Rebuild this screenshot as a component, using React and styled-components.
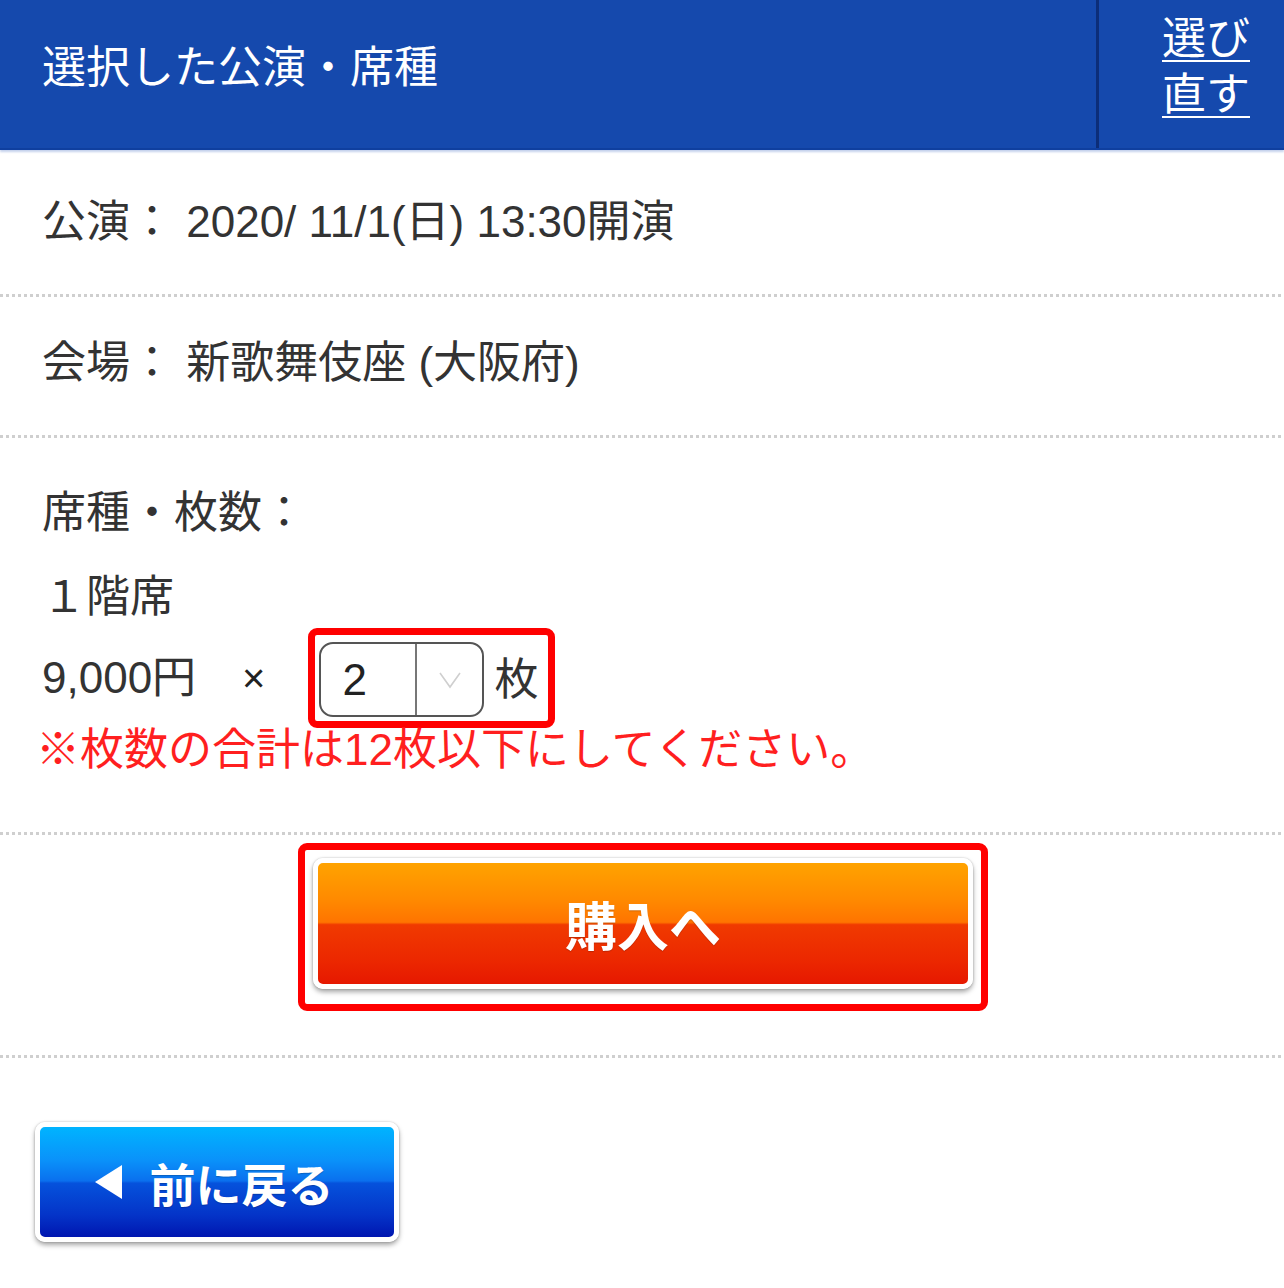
import React from 'react';
import styled, { createGlobalStyle } from 'styled-components';

const GlobalStyle = createGlobalStyle`
    html, body {
        margin: 0;
        padding: 0;
        background: #fff;
    }
    body {
        font-family: "Liberation Sans", "Noto Sans CJK JP", sans-serif;
        color: #333;
    }
`;

const Page = styled.div`
    width: 1284px;
`;

const Header = styled.header`
    display: flex;
    height: 148px;
    background: #1549ad;
    border-bottom: 2px solid #0f3f9f;
    box-shadow: 0 2px 2px rgba(21, 73, 174, 0.25);
`;

const HeaderTitle = styled.h1`
    flex: 1;
    margin: 0;
    padding-left: 42px;
    padding-bottom: 20px;
    display: flex;
    align-items: center;
    font-size: 44px;
    font-weight: 400;
    color: #fff;
`;

const RedoCell = styled.div`
    box-sizing: border-box;
    width: 188px;
    border-left: 3px solid #0c2d78;
    display: flex;
    align-items: center;
    justify-content: flex-end;
    padding-right: 34px;
    padding-bottom: 14px;
`;

const RedoLink = styled.a`
    color: #fff;
    font-size: 44px;
    line-height: 56px;
    text-decoration: underline;
    text-decoration-thickness: 2px;
    text-underline-offset: 6px;
`;

const Row = styled.section`
    padding: ${p => p.$pad};
    font-size: 44px;
    line-height: 44px;
`;

const Divider = styled.div`
    height: 3px;
    background-image: linear-gradient(to right, #cfcfcf 3px, transparent 3px);
    background-size: 6px 3px;
`;

const Label = styled.div`
    line-height: 84px;
`;

const SeatName = styled.div`
    padding-top: 11px;
    line-height: 62px;
`;

const PriceRow = styled.div`
    display: flex;
    align-items: center;
    height: 100px;
`;

const Times = styled.span`
    margin-left: 46px;
    margin-right: 43px;
    font-size: 40px;
    color: #222;
`;

const Highlight = styled.div`
    display: inline-flex;
    align-items: center;
    border: 7px solid #ff0000;
    border-radius: 9px;
    padding: ${p => p.$pad};
`;

const Select = styled.div`
    box-sizing: border-box;
    display: flex;
    width: 165px;
    height: 75px;
    border: 2px solid #555;
    border-radius: 14px;
`;

const SelectValue = styled.div`
    width: 73px;
    padding-left: 21px;
    display: flex;
    align-items: center;
    font-size: 44px;
    color: #222;
`;

const SelectArrow = styled.div`
    flex: 1;
    border-left: 2px solid #777;
    display: flex;
    align-items: center;
    justify-content: center;
`;

const Unit = styled.span`
    margin-left: 10px;
    font-size: 44px;
`;

const Note = styled.p`
    margin: 0 0 0 -6px;
    color: #ff1f1f;
    font-size: 44px;
    line-height: 44px;
`;

const Center = styled.div`
    display: flex;
    justify-content: center;
    padding: 8px 0 44px 2px;
`;

const GlossButton = styled.button`
    box-sizing: border-box;
    display: flex;
    align-items: center;
    justify-content: center;
    gap: ${p => p.$gap || 0}px;
    width: ${p => p.$w}px;
    height: ${p => p.$h}px;
    padding: 0 ${p => p.$pr || 0}px 0 0;
    border: 5px solid #fff;
    border-radius: 10px;
    background: ${p => p.$bg};
    box-shadow: 0 3px 5px rgba(0, 0, 0, 0.35), 0 0 2px rgba(0, 0, 0, 0.25);
    color: #fff;
    font-family: "Noto Sans CJK JP", sans-serif;
    font-size: ${p => p.$fs}px;
    font-weight: 700;
    text-shadow: 0 1px 1px rgba(0, 0, 0, 0.2);
    cursor: pointer;
`;

const BackWrap = styled.div`
    padding: 64px 0 40px 35px;
`;

const ORANGE = 'linear-gradient(to bottom, #ffa300 0%, #ff8a00 30%, #ff7400 49%, #f03a00 51%, #ec2800 80%, #e61800 100%)';
const BLUE = 'linear-gradient(to bottom, #00b4ff 0%, #0a92fa 30%, #0a70ee 49%, #0552dc 51%, #0434c8 80%, #0016b0 100%)';

export default function App() {
    return (
        <Page>
            <GlobalStyle />
            <Header>
                <HeaderTitle>選択した公演・席種</HeaderTitle>
                <RedoCell>
                    <RedoLink href="#">選び<br />直す</RedoLink>
                </RedoCell>
            </Header>

            <Row $pad="50px 42px 50px">公演： 2020/ 11/1(日) 13:30開演</Row>
            <Divider />
            <Row $pad="44px 42px 50px">会場： 新歌舞伎座 (大阪府)</Row>
            <Divider />

            <Row $pad="33px 42px 60px">
                <Label>席種・枚数：</Label>
                <SeatName>１階席</SeatName>
                <PriceRow>
                    <span>9,000円</span>
                    <Times>×</Times>
                    <Highlight $pad="7px 10px 4px 4px">
                        <Select>
                            <SelectValue>2</SelectValue>
                            <SelectArrow>
                                <svg width="24" height="18" viewBox="0 0 24 18">
                                    <polyline points="2,2 12,16 22,2" fill="none" stroke="#cfcfcf" strokeWidth="1.6" />
                                </svg>
                            </SelectArrow>
                        </Select>
                        <Unit>枚</Unit>
                    </Highlight>
                </PriceRow>
                <Note>※枚数の合計は12枚以下にしてください。</Note>
            </Row>
            <Divider />

            <Center>
                <Highlight $pad="8px 8px 15px 8px">
                    <GlossButton $w={660} $h={131} $bg={ORANGE} $fs={52}>購入へ</GlossButton>
                </Highlight>
            </Center>
            <Divider />

            <BackWrap>
                <GlossButton $w={364} $h={120} $bg={BLUE} $fs={46} $gap={28} $pr={6}>
                    <svg width="27" height="34" viewBox="0 0 27 34">
                        <polygon points="27,0 27,34 0,17" fill="#fff" />
                    </svg>
                    前に戻る
                </GlossButton>
            </BackWrap>
        </Page>
    );
}
